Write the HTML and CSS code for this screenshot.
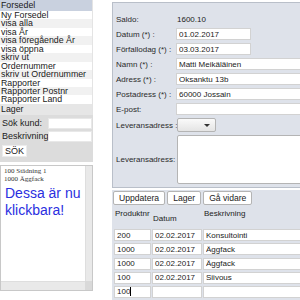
FILE: index.html
```html
<!DOCTYPE html>
<html lang="sv">
<head>
    <meta charset="UTF-8">
    <meta name="viewport" content="width=device-width, initial-scale=1.0">
    <title>Forsedel</title>
    <link rel="stylesheet" href="styles.css">
</head>
<body>
    <div class="page">
        <div class="sidebar">
            <ul class="menu">
                <li class="menu-head">Forsedel</li>
                <li>Ny Forsedel</li>
                <li class="alt">visa alla</li>
                <li>visa År</li>
                <li class="alt">visa föregående År</li>
                <li>visa öppna</li>
                <li class="alt">skriv ut</li>
                <li>Ordernummer</li>
                <li class="alt">skriv ut Ordernummer</li>
                <li>Rapporter</li>
                <li class="alt">Rapporter Postnr</li>
                <li>Rapporter Land</li>
                <li class="lager">Lager</li>
            </ul>
            <form class="search">
                <div class="search-row">
                    <label for="kund">Sök kund:</label>
                    <input type="text" id="kund">
                </div>
                <div class="search-row">
                    <label for="beskr">Beskrivning:</label>
                    <input type="text" id="beskr">
                </div>
                <button type="button" class="sok">SÖK</button>
            </form>
            <div class="results">
                <div class="results-body">
                    <div class="hits">100 Städning 1<br>1000 Äggfack</div>
                    <p class="note">Dessa är nu klickbara!</p>
                </div>
                <div class="vbar"></div>
                <div class="hbar"></div>
                <div class="corner"></div>
            </div>
        </div>

        <div class="main">
            <div class="panel">
                <div class="field">
                    <span class="lbl">Saldo:</span>
                    <span class="val">1600.10</span>
                </div>
                <div class="field">
                    <span class="lbl">Datum (*) :</span>
                    <input type="text" class="short" value="01.02.2017">
                </div>
                <div class="field">
                    <span class="lbl">Förfallodag (*) :</span>
                    <input type="text" class="short" value="03.03.2017">
                </div>
                <div class="field">
                    <span class="lbl">Namn (*) :</span>
                    <input type="text" class="long" value="Matti Meikäläinen">
                </div>
                <div class="field">
                    <span class="lbl">Adress (*) :</span>
                    <input type="text" class="long" value="Oksanktu 13b">
                </div>
                <div class="field">
                    <span class="lbl">Postadress (*) :</span>
                    <input type="text" class="long" value="60000 Jossain">
                </div>
                <div class="field">
                    <span class="lbl">E-post:</span>
                    <input type="text" class="long">
                </div>
                <div class="field">
                    <span class="lbl">Leveransadress :</span>
                    <span class="select"><span class="arrow"></span></span>
                </div>
                <div class="field">
                    <span class="lbl">Leveransadress:</span>
                    <textarea></textarea>
                </div>
            </div>

            <div class="rows">
                <div class="buttons">
                    <button type="button">Uppdatera</button>
                    <button type="button">Lager</button>
                    <button type="button">Gå vidare</button>
                </div>
                <div class="grid">
                    <span class="th">Produktnr</span>
                    <span class="th low">Datum</span>
                    <span class="th">Beskrivning</span>

                    <input type="text" value="200">
                    <input type="text" value="02.02.2017">
                    <input type="text" value="Konsultointi">

                    <input type="text" value="1000">
                    <input type="text" value="02.02.2017">
                    <input type="text" value="Äggfack">

                    <input type="text" value="1000">
                    <input type="text" value="02.02.2017">
                    <input type="text" value="Äggfack">

                    <input type="text" value="100">
                    <input type="text" value="02.02.2017">
                    <input type="text" value="Siivous">

                    <span class="cell-input">100<span class="caret"></span></span>
                    <input type="text">
                    <input type="text">
                </div>
            </div>
        </div>
    </div>
</body>
</html>
```

FILE: styles.css
```css
body {
    margin: 0;
    font-family: "Liberation Sans", Arial, sans-serif;
    font-size: 9px;
    color: #222;
    background: #fff;
    overflow: hidden;
}
.page {
    display: flex;
    width: 300px;
    height: 300px;
}

/* left column */
.sidebar {
    width: 93px;
    flex: none;
    display: flex;
    flex-direction: column;
}
.menu {
    list-style: none;
    margin: 0;
    padding: 0;
    border-right: 1px solid #e4e4e4;
    font-size: 8.8px;
}
.menu li {
    height: 8.45px;
    line-height: 8.45px;
    padding-left: 1px;
    white-space: nowrap;
    color: #1a1a1a;
}
.menu .menu-head {
    height: 11px;
    line-height: 11px;
    background: #c9d1df;
}
.menu .alt {
    background: #f1f1f1;
}
.menu .lager {
    height: 11px;
    line-height: 11px;
    background: #e6e6e6;
}
.search {
    background: #dcdcdc;
    padding: 2px 1px 5px 2px;
    margin: 0;
}
.search-row {
    display: flex;
    align-items: center;
    height: 13px;
}
.search-row label {
    width: 46px;
    flex: none;
}
.search-row input {
    width: 44px;
    height: 11px;
    box-sizing: border-box;
    border: 1px solid #e8e8e8;
    background: #fff;
    padding: 0;
    margin: 0;
}
.sok {
    margin-top: 2px;
    width: 25px;
    height: 12px;
    padding: 0;
    font-family: inherit;
    font-size: 9px;
    background: #fff;
    border: 1px solid #ececec;
    color: #222;
}
.results {
    margin-top: 3px;
    height: 126px;
    box-sizing: border-box;
    border: 1px solid #c8c8c8;
    display: grid;
    grid-template-columns: 1fr 8px;
    grid-template-rows: 1fr 9px;
    overflow: hidden;
}
.results-body {
    padding: 1px 0 0 3px;
}
.vbar {
    background: #e9e9e9;
    border-left: 1px solid #dedede;
}
.hbar {
    background: #e9e9e9;
    border-top: 1px solid #dedede;
}
.corner {
    background: #d9d9d9;
}
.hits {
    font-family: "Liberation Serif", "Times New Roman", serif;
    font-size: 7px;
    line-height: 8px;
    color: #333;
}
.note {
    margin: 2px 0 0 1px;
    width: 80px;
    font-size: 14px;
    line-height: 17px;
    color: #2b2fe0;
}

/* right column */
.main {
    margin-left: 19px;
    width: 240px;
    flex: none;
    display: flex;
    flex-direction: column;
    font-size: 8px;
}
.panel {
    margin-top: 2px;
    background: #dee2ea;
    border: 1px solid #b9bfc9;
    padding: 10px 3px 3px 3px;
    display: flex;
    flex-direction: column;
    gap: 3px;
}
.field {
    display: flex;
    align-items: center;
    min-height: 12px;
}
.lbl {
    width: 60px;
    flex: none;
    white-space: nowrap;
    color: #2a2a2a;
}
.val {
    padding-left: 1px;
}
.panel input,
.grid input,
.cell-input {
    height: 12px;
    box-sizing: border-box;
    border: 1px solid #d2d2d2;
    background: #fff;
    margin: 0;
    padding: 0 2px;
    font-family: inherit;
    font-size: 8px;
    line-height: 10px;
    color: #222;
}
.panel .short {
    width: 75px;
}
.panel .long {
    width: 170px;
}
.select {
    position: relative;
    margin-left: 1px;
    width: 39px;
    height: 14px;
    box-sizing: border-box;
    border: 1px solid #b4b4b4;
    border-radius: 2px;
    background: linear-gradient(#fafafa, #e4e4e4);
}
.arrow {
    position: absolute;
    right: 5px;
    top: 5px;
    border-left: 3px solid transparent;
    border-right: 3px solid transparent;
    border-top: 3px solid #333;
}
.panel textarea {
    margin: 0 0 0 1px;
    width: 170px;
    height: 49px;
    box-sizing: border-box;
    border: 1px solid #b4b4b4;
    border-radius: 2px;
    background: #fff;
    resize: none;
}

/* lower table */
.rows {
    margin-top: 2px;
    flex: 1;
    background: #dee2ea;
    padding: 1px 0 0 1px;
}
.buttons {
    display: flex;
    gap: 2px;
}
.buttons button {
    height: 14px;
    padding: 0 5px;
    font-family: inherit;
    font-size: 8.6px;
    color: #222;
    background: #fff;
    border: 1px solid #b4b4b4;
    border-radius: 2px;
}
.grid {
    display: grid;
    grid-template-columns: 37px 50px 100px;
    column-gap: 1px;
    row-gap: 2.2px;
    margin-top: 4px;
    padding-left: 1px;
}
.th {
    height: 18px;
    padding-left: 1px;
    white-space: nowrap;
    color: #222;
}
.th.low {
    padding-top: 5px;
    height: 13px;
}
.grid input {
    width: 100%;
}
.cell-input {
    display: flex;
    align-items: center;
}
.caret {
    display: inline-block;
    width: 1px;
    height: 9px;
    background: #000;
}
```
